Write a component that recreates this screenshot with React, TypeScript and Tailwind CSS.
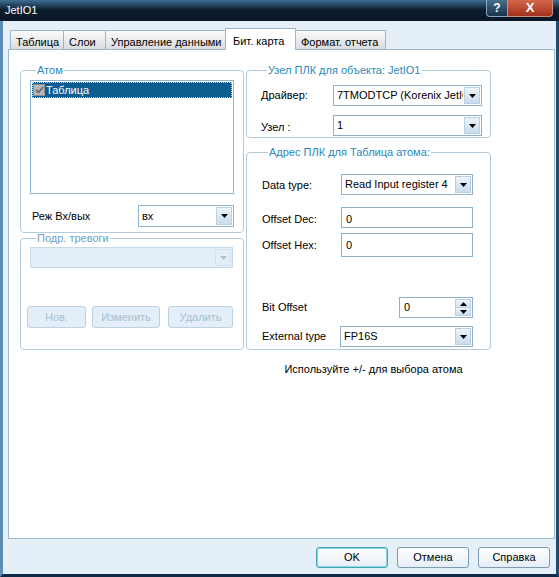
import React from "react";

const font = { fontFamily: '"Liberation Sans", Arial, sans-serif' };

// маленькая стрелка вниз для комбобоксов
const Arrow = ({ disabled }: { disabled?: boolean }) => (
	<svg width="7" height="4" viewBox="0 0 7 4">
		<path d="M0 0h7L3.5 4z" fill={disabled ? "#a9c3d8" : "#000"} />
	</svg>
);

const Combo = ({
	value,
	className,
	disabled,
}: {
	value: string;
	className: string;
	disabled?: boolean;
}) => (
	<div
		className={`flex items-stretch min-w-0 border ${
			disabled ? "border-[#c6d9e8] bg-[#e3eef8]" : "border-[#8fb0c8] bg-white"
		} ${className}`}
	>
		<div className="flex-1 min-w-0 overflow-hidden whitespace-nowrap pl-[3px] flex items-center">
			{value}
		</div>
		<div
			className={`w-[16px] shrink-0 m-[1px] flex items-center justify-center border ${
				disabled
					? "border-[#d3e2ee] bg-[#e3eef8]"
					: "border-[#b9d0e4] bg-gradient-to-b from-[#eef4fa] to-[#c9dcee]"
			}`}
		>
			<Arrow disabled={disabled} />
		</div>
	</div>
);

const Input = ({ value, className }: { value: string; className: string }) => (
	<div
		className={`border border-[#8fb0c8] bg-white pl-[4px] pt-[3px] ${className}`}
	>
		{value}
	</div>
);

const Group = ({
	title,
	disabled,
	className,
	children,
}: {
	title: string;
	disabled?: boolean;
	className?: string;
	children: React.ReactNode;
}) => (
	<fieldset
		className={`min-w-0 border border-[#b4cbdc] rounded-[4px] ${className ?? ""}`}
	>
		<legend
			className={`ml-[6px] px-[1px] leading-[13px] ${
				disabled ? "text-[#6fa0c9]" : "text-[#2b88bb]"
			}`}
		>
			{title}
		</legend>
		{children}
	</fieldset>
);

const SmallBtn = ({ label, className }: { label: string; className: string }) => (
	<div
		className={`h-[22px] flex items-center justify-center rounded-[3px] border border-[#bcd2e3] bg-[#e3eef8] text-[#a6bfd3] ${className}`}
	>
		{label}
	</div>
);

const DlgBtn = ({ label, focused }: { label: string; focused?: boolean }) => (
	<div
		className={`w-[72px] h-[21px] flex items-center justify-center rounded-[3px] border bg-gradient-to-b from-white to-[#e5edf5] ${
			focused
				? "border-[#3aa6b8] shadow-[inset_0_0_0_1px_#8fd6df]"
				: "border-[#7d9bb3]"
		}`}
	>
		{label}
	</div>
);

const tabs = [
	{ t: "Таблица", w: "w-[54px]" },
	{ t: "Слои", w: "w-[43px]" },
	{ t: "Управление данными", w: "w-[121px]" },
	{ t: "Бит. карта", w: "w-[71px]" },
	{ t: "Формат. отчета", w: "w-[91px]" },
];

export default function App() {
	return (
		<div
			className="w-[559px] h-[577px] flex flex-col text-[11px] text-black bg-[#1b3c5c]"
			style={font}
		>
			{/* заголовок окна */}
			<div className="h-[21px] flex items-start justify-between bg-gradient-to-b from-[#3f6f96] via-[#0b1c2c] to-[#0a1726]">
				<div className="pl-[5px] pt-[4px] text-white text-[11px] leading-[13px]">
					JetIO1
				</div>
				<div className="flex pr-[6px]">
					<div className="w-[22px] h-[17px] rounded-bl-[4px] border border-t-0 border-[#8aa6bd] bg-gradient-to-b from-[#4a6f8d] to-[#17324a] flex items-center justify-center text-white font-bold text-[12px]">
						?
					</div>
					<div className="w-[45px] h-[17px] rounded-br-[4px] border border-t-0 border-l-0 border-[#c99080] bg-gradient-to-b from-[#d5664b] to-[#a3301a] flex items-center justify-center text-white font-bold text-[13px]">
						X
					</div>
				</div>
			</div>

			{/* тело окна */}
			<div className="flex-1 flex flex-col bg-[#e4eff8] border-l-[3px] border-l-[#5c8db7] border-r-[3px] border-r-[#23496b] border-b-[3px] border-b-[#0f2b45]">
				{/* вкладки */}
				<div className="flex items-end pl-[7px] pt-[6px] h-[28px]">
					{tabs.map((x, i) =>
						i === 3 ? (
							<div
								key={x.t}
								className={`${x.w} h-[22px] pl-[7px] pt-[4px] bg-white border border-b-0 border-[#9db9cc] relative top-[1px] z-10 -ml-[1px]`}
							>
								{x.t}
							</div>
						) : (
							<div
								key={x.t}
								className={`${x.w} h-[19px] pl-[5px] pt-[3px] border border-b-0 border-[#9fb4c4] bg-gradient-to-b from-[#fafafa] to-[#d9dde0] -ml-[1px] first:ml-0`}
							>
								{x.t}
							</div>
						)
					)}
				</div>

				{/* содержимое вкладки */}
				<div className="ml-[5px] mr-[1px] h-[490px] bg-white border border-[#9db9cc] pl-[11px] pt-[14px]">
					<div className="flex gap-[2px]">
						{/* левая колонка */}
						<div className="w-[224px] flex flex-col">
							<Group title="Атом" className="pl-[9px] pr-[9px] pb-[5px]">
								<div className="mt-[3px] h-[114px] border border-[#93b3ca] p-[1px]">
									<div className="h-[16px] flex items-center bg-[#0b5d8f] text-white outline-1 outline-dotted outline-[#c0d6e6] -outline-offset-1">
										<div className="w-[12px] h-[12px] ml-[1px] bg-[#b7b7b7] border border-[#8f8f8f] flex items-center justify-center">
											<svg width="9" height="8" viewBox="0 0 9 8">
												<path d="M1 4l2.5 2.5L8 1" stroke="#6c6c6c" strokeWidth="1.8" fill="none" />
											</svg>
										</div>
										<span className="ml-[1px]">Таблица</span>
									</div>
								</div>
								<div className="mt-[11px] flex items-center">
									<div className="w-[108px] pl-[2px]">Реж Вх/вых</div>
									<Combo value="вх" className="w-[96px] h-[22px]" />
								</div>
							</Group>
							<Group
								title="Подр. тревоги"
								disabled
								className="mt-[-1px] pl-[9px] pr-[10px] pb-[21px]"
							>
								<Combo value="" disabled className="mt-[2px] h-[21px]" />
								<div className="mt-[38px] flex -ml-[3px]">
									<SmallBtn label="Нов." className="w-[60px]" />
									<SmallBtn label="Изменить" className="w-[69px] ml-[6px]" />
									<SmallBtn label="Удалить" className="w-[66px] ml-[8px]" />
								</div>
							</Group>
						</div>

						{/* правая колонка */}
						<div className="w-[245px] flex flex-col">
							<Group
								title="Узел ПЛК для объекта: JetIO1"
								className="pl-[14px] pr-[8px] pb-[1px]"
							>
								<div className="mt-[8px] flex items-center">
									<div className="w-[72px] shrink-0">Драйвер:</div>
									<Combo
										value="7TMODTCP (Korenix JetIO"
										className="flex-1 h-[21px]"
									/>
								</div>
								<div className="mt-[9px] flex items-center">
									<div className="w-[72px] shrink-0 pt-[3px]">Узел :</div>
									<Combo value="1" className="flex-1 h-[21px]" />
								</div>
							</Group>
							<Group
								title="Адрес ПЛК для Таблица атома:"
								className="mt-[8px] pl-[15px] pr-[17px] pb-[2px]"
							>
								<div className="mt-[15px] flex items-center">
									<div className="w-[79px] pt-[1px]">Data type:</div>
									<Combo value="Read Input register 4" className="flex-1 h-[21px]" />
								</div>
								<div className="mt-[12px] flex items-start">
									<div className="w-[79px] pt-[4px]">Offset Dec:</div>
									<Input value="0" className="flex-1 h-[21px]" />
								</div>
								<div className="mt-[5px] flex items-start">
									<div className="w-[79px] pt-[4px]">Offset Hex:</div>
									<Input value="0" className="flex-1 h-[24px]" />
								</div>
								<div className="mt-[40px] flex items-center">
									<div className="w-[137px]">Bit Offset</div>
									<div className="flex-1 h-[21px] flex border border-[#8fb0c8] bg-white">
										<div className="flex-1 pl-[4px] flex items-center">0</div>
										<div className="w-[16px] m-[1px] flex flex-col">
											<div className="flex-1 flex items-center justify-center border border-[#b9d0e4] bg-gradient-to-b from-[#eef4fa] to-[#d3e2f1]">
												<svg width="7" height="4" viewBox="0 0 7 4">
													<path d="M0 4h7L3.5 0z" fill="#000" />
												</svg>
											</div>
											<div className="flex-1 flex items-center justify-center border border-t-0 border-[#b9d0e4] bg-gradient-to-b from-[#eef4fa] to-[#c9dcee]">
												<Arrow />
											</div>
										</div>
									</div>
								</div>
								<div className="mt-[8px] flex items-center">
									<div className="w-[78px]">External type</div>
									<Combo value="FP16S" className="flex-1 h-[21px]" />
								</div>
							</Group>
							<div className="mt-[11px] text-center pl-[10px]">
								Используйте +/- для выбора атома
							</div>
						</div>
					</div>
				</div>

				{/* кнопки диалога */}
				<div className="flex justify-end gap-[9px] pt-[8px] pr-[6px]">
					<DlgBtn label="OK" focused />
					<DlgBtn label="Отмена" />
					<DlgBtn label="Справка" />
				</div>
			</div>
		</div>
	);
}
